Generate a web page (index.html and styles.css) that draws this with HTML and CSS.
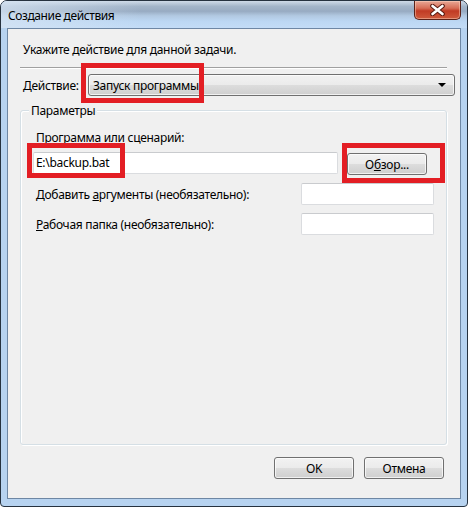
FILE: index.html
```html
<!DOCTYPE html>
<html lang="ru">
  <head>
    <meta charset="UTF-8" />
    <title>Создание действия</title>
    <link rel="stylesheet" href="styles.css">
  </head>
  <body>
    <div class="window">
      <!-- Title bar -->
      <div class="titlebar">
        <span class="title">Создание действия</span>
        <div class="close-btn">
          <svg width="15" height="12" viewBox="0 0 15 12">
            <path d="M2.5 2 L12.5 10 M12.5 2 L2.5 10" stroke="#5a1a10" stroke-width="4.6" stroke-linecap="round" />
            <path d="M2.5 2 L12.5 10 M12.5 2 L2.5 10" stroke="#ffffff" stroke-width="2.6" stroke-linecap="round" />
          </svg>
        </div>
      </div>

      <!-- Dialog body -->
      <div class="client">
        <p class="intro">Укажите действие для данной задачи.</p>
        <div class="separator"></div>

        <div class="action-row">
          <label class="action-label"><u>Д</u>ействие:</label>
          <div class="combo">
            <span class="combo-text">Запуск программы</span>
            <span class="combo-arrow"></span>
          </div>
        </div>

        <div class="group">
          <span class="group-title">Параметры</span>
          <label class="field-label">Программа или сценарий:</label>
          <div class="program-row">
            <div class="textbox program-input">E:\backup.bat</div>
            <button class="btn browse-btn">О<u>б</u>зор...</button>
          </div>
          <div class="option-row">
            <label class="option-label">Добавить <u>а</u>ргументы (необязательно):</label>
            <div class="textbox option-input"></div>
          </div>
          <div class="option-row">
            <label class="option-label"><u>Р</u>абочая папка (необязательно):</label>
            <div class="textbox option-input"></div>
          </div>
        </div>

        <div class="button-row">
          <button class="btn">OK</button>
          <button class="btn">Отмена</button>
        </div>

        <!-- red highlight marks -->
        <div class="mark mark-combo"></div>
        <div class="mark mark-input"></div>
        <div class="mark mark-browse"></div>
      </div>
    </div>
  </body>
</html>
```

FILE: styles.css
```css
* {
  margin: 0;
  padding: 0;
  box-sizing: border-box;
  font-family: "Noto Sans", "Open Sans", Arial, sans-serif;
}

body {
  background: #ffffff;
  color: #000;
  font-size: 12px;
  letter-spacing: -0.3px;
}

.window {
  width: 468px;
  height: 507px;
  border: 1px solid #26323f;
  border-radius: 7px 7px 4px 4px;
  background: #b7d3f0;
  display: flex;
  flex-direction: column;
  overflow: hidden;
}

/* Title bar */
.titlebar {
  height: 27px;
  display: flex;
  justify-content: space-between;
  align-items: flex-start;
  padding-left: 7px;
  background:
    linear-gradient(to right, rgba(214, 228, 243, 0.75), rgba(214, 228, 243, 0) 30%),
    linear-gradient(to bottom, #cfdbe8 0, #a3b5c9 20%, #98abc2 38%, #b2c9e2 55%, #bcd7f3 75%, #c3dcf6 100%);
}

.title {
  line-height: 15px;
  padding-top: 7px;
  font-size: 12px;
  letter-spacing: -0.4px;
}

.close-btn {
  width: 47px;
  height: 19px;
  margin-right: 6px;
  border: 1px solid #5b2118;
  border-top: none;
  border-radius: 0 0 5px 5px;
  background: linear-gradient(to bottom, #e9a896 0, #d66d56 40%, #c13b24 55%, #cf5a3c 100%);
  box-shadow: inset 0 0 0 1px rgba(255, 220, 200, 0.45);
  display: flex;
  justify-content: center;
  align-items: center;
}

/* Client area */
.client {
  position: relative;
  flex: 1;
  margin: 0 6px 7px 6px;
  border: 1px solid #6e87a4;
  background: #f0f0f0;
  display: flex;
  flex-direction: column;
}

.intro {
  padding: 13px 0 0 15px;
  line-height: 15px;
}

.separator {
  margin: 10px 13px 0 12px;
  height: 2px;
  border-top: 1px solid #a0a0a0;
  border-bottom: 1px solid #ffffff;
}

.action-row {
  display: flex;
  align-items: center;
  margin-top: 5px;
  padding-left: 15px;
  margin-right: 5px;
}

.action-label {
  width: 65px;
  line-height: 15px;
}

.combo {
  flex: 1;
  height: 22px;
  border: 1px solid #707070;
  border-radius: 3px;
  background: linear-gradient(to bottom, #f2f2f2 0, #ebebeb 50%, #dddddd 50%, #cfcfcf 100%);
  box-shadow: inset 0 0 0 1px rgba(255, 255, 255, 0.7);
  display: flex;
  align-items: center;
  justify-content: space-between;
  padding: 0 8px 0 4px;
}

.combo-arrow {
  width: 0;
  height: 0;
  border-left: 4px solid transparent;
  border-right: 4px solid transparent;
  border-top: 4px solid #000;
}

/* Group box */
.group {
  margin: 14px 13px 0 12px;
  height: 335px;
  border: 1px solid #d5dfe5;
  border-radius: 3px;
  box-shadow: inset 1px 1px 0 #ffffff, 1px 1px 0 #ffffff;
  display: flex;
  flex-direction: column;
  padding: 0 12px 0 12px;
}

.group-title {
  align-self: flex-start;
  margin: -8px 0 0 -4px;
  padding: 0 2px;
  line-height: 15px;
  background: #f0f0f0;
}

.field-label {
  margin: 12px 0 0 3px;
  line-height: 15px;
}

.program-row {
  display: flex;
  align-items: flex-start;
  margin-top: 7px;
  gap: 9px;
}

.textbox {
  height: 22px;
  background: #ffffff;
  border: 1px solid #dadcdf;
  border-top-color: #c9cbce;
  border-radius: 2px;
  line-height: 20px;
  padding-left: 2px;
}

.program-input {
  width: 305px;
}

.browse-btn {
  width: 86px;
  margin-top: 1px;
  border-color: #3c7fb1;
  box-shadow: inset 0 0 0 1px #8ed3f5;
}

.option-row {
  display: flex;
  justify-content: space-between;
  align-items: center;
  margin-top: 8px;
  padding-left: 3px;
}

.option-input {
  width: 133px;
}

/* Buttons */
.btn {
  height: 22px;
  width: 80px;
  border: 1px solid #707070;
  border-radius: 3px;
  background: linear-gradient(to bottom, #f2f2f2 0, #ebebeb 50%, #dddddd 50%, #cfcfcf 100%);
  box-shadow: inset 0 0 0 1px rgba(255, 255, 255, 0.7);
  font-size: 12px;
  letter-spacing: -0.3px;
  color: #000;
}

.button-row {
  display: flex;
  justify-content: flex-end;
  gap: 10px;
  margin: 12px 16px 0 0;
}

/* Red annotation frames */
.mark {
  position: absolute;
  border: 5px solid #e31e24;
}

.mark-combo {
  left: 73px;
  top: 34px;
  width: 123px;
  height: 40px;
}

.mark-input {
  left: 19px;
  top: 114px;
  width: 98px;
  height: 35px;
}

.mark-browse {
  left: 334px;
  top: 114px;
  width: 103px;
  height: 40px;
}
```
